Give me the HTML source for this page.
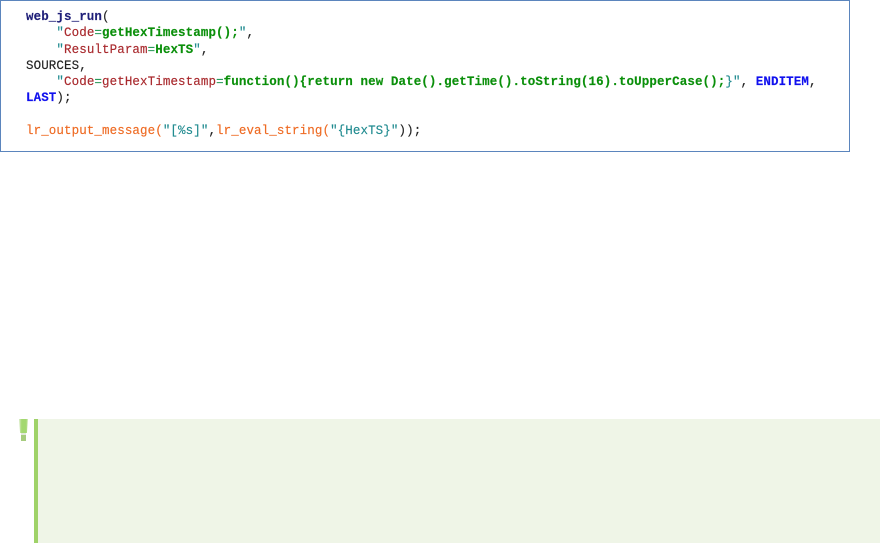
<!DOCTYPE html>
<html>
<head>
<meta charset="utf-8">
<style>
html,body{margin:0;padding:0;background:#fff;width:880px;height:543px;overflow:hidden}
#box{position:absolute;left:0;top:0;width:848px;height:150px;border:1px solid #5b85bd;background:#fff}
pre{position:absolute;left:26px;top:9px;margin:0;font:12.5px/16.3px "Liberation Mono",monospace;letter-spacing:.1px;color:#222;font-weight:normal;filter:blur(.3px);-webkit-text-stroke:.15px}
.n{color:#1e1e78}
.t{color:#1f8a8f}
.r{color:#a8282c}
.g{color:#0a8f0a;font-weight:bold}
.e{color:#2a9a5a}
.b{color:#1010ee;font-weight:bold}
.o{color:#ee6a22}
.k{color:#222}
#bar{position:absolute;left:34px;top:419px;width:4px;height:124px;background:#9fd268}
#bg{position:absolute;left:38px;top:419px;width:842px;height:124px;background:#eff5e7}
#ic1{position:absolute;left:19px;top:419px;width:9px;height:14px;background:linear-gradient(90deg,#dcedc8,#a3d870 30%,#a3d870 80%,#d8ecc0);clip-path:polygon(0 0,100% 0,88% 100%,12% 100%)}
#ic2{position:absolute;left:21px;top:435px;width:5px;height:6px;background:#a6cc7e}
#ic3{position:absolute;left:21px;top:433px;width:5px;height:2px;background:#e2e8da}
</style>
</head>
<body>
<div id="box"></div>
<pre><span class="n" style="font-weight:bold">web_js_run</span><span class="k">(</span>
    <span class="t">"</span><span class="r">Code</span><span class="e">=</span><span class="g">getHexTimestamp();</span><span class="t">"</span><span class="k">,</span>
    <span class="t">"</span><span class="r">ResultParam</span><span class="e">=</span><span class="g">HexTS</span><span class="t">"</span><span class="k">,</span>
<span class="k">SOURCES,</span>
    <span class="t">"</span><span class="r">Code</span><span class="e">=</span><span class="r">getHexTimestamp</span><span class="e">=</span><span class="g">function(){return new Date().getTime().toString(16).toUpperCase();</span><span class="t">}"</span><span class="k">, </span><span class="b">ENDITEM</span><span class="k">,</span>
<span class="b">LAST</span><span class="k">);</span>

<span class="o">lr_output_message(</span><span class="t">"[%s]"</span><span class="k">,</span><span class="o">lr_eval_string(</span><span class="t">"{HexTS}"</span><span class="k">));</span></pre>
<div id="ic1"></div><div id="ic3"></div><div id="ic2"></div>
<div id="bar"></div><div id="bg"></div>
</body>
</html>
